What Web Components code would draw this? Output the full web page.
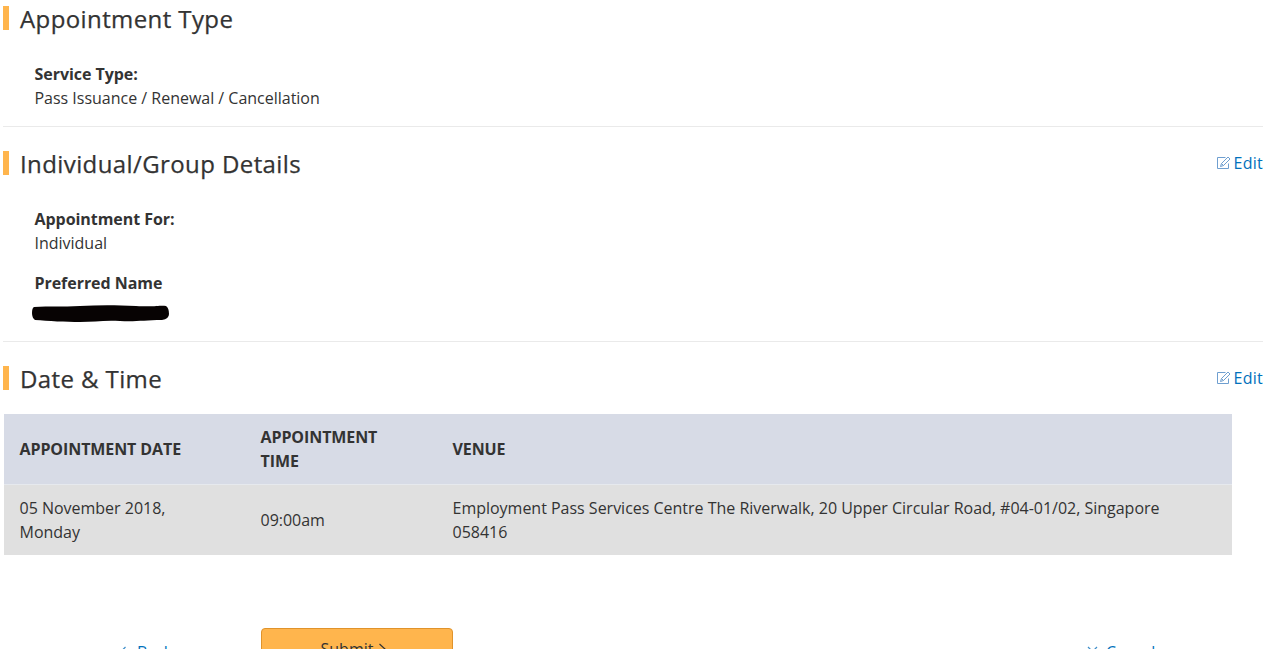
<!DOCTYPE html>
<html>
<head>
<meta charset="utf-8">
<title>Appointment review</title>
<style>
  html { overflow: hidden; }
  body {
    margin: 0;
    padding: 6px 8px 0 3px;
    font-family: "Open Sans", sans-serif;
    font-size: 16px;
    line-height: 24px;
    letter-spacing: -0.012px;
    color: #333;
    background: #fff;
  }
</style>
</head>
<body>
  <review-section heading="Appointment Type">
    <review-field label="Service Type:">Pass Issuance / Renewal / Cancellation</review-field>
  </review-section>

  <review-section heading="Individual/Group Details" editable>
    <review-field label="Appointment For:">Individual</review-field>
    <review-field label="Preferred Name"><redacted-text></redacted-text></review-field>
  </review-section>

  <review-section heading="Date &amp; Time" editable plain>
    <appointment-table></appointment-table>
  </review-section>

  <form-actions></form-actions>

<script>
const sectionTemplate = document.createElement('template');
sectionTemplate.innerHTML = `
  <style>
    :host {
      display: block;
      padding-bottom: 16px;
      margin-bottom: 24px;
      border-bottom: 1px solid #eaeaea;
    }
    :host([plain]) {
      padding-bottom: 0;
      margin-bottom: 0;
      border-bottom: 0;
    }
    .head {
      display: flex;
      align-items: center;
      justify-content: space-between;
      height: 24px;
      margin-bottom: 32px;
    }
    :host([plain]) .head {
      margin-bottom: 24px;
    }
    h2 {
      display: flex;
      margin: 0;
      border-left: 6px solid #ffb54d;
      font-size: 24px;
      line-height: 24px;
      font-weight: 400;
      letter-spacing: 0.4px;
      -webkit-text-stroke: 0.25px #333;
      color: #333;
    }
    h2 span {
      padding: 1px 0 0 11px;
      height: 23px;
    }
    a {
      display: none;
      align-items: center;
      gap: 3px;
      color: #0071bc;
      text-decoration: none;
      letter-spacing: 0.25px;
    }
    :host([editable]) a {
      display: flex;
    }
    svg {
      width: 14px;
      height: 14px;
      fill: none;
      stroke: #6f9fd0;
      stroke-width: 1;
    }
  </style>
  <div class="head">
    <h2><span></span></h2>
    <a href="#">
      <svg viewBox="0 0 14 14">
        <path d="M11.5 7.5v5h-11v-11h8"/>
        <path d="M3.5 10.5l1-3 6.5-6.5 2 2-6.5 6.5z"/>
        <path d="M4.5 7.5l2 2"/>
      </svg>
      Edit
    </a>
  </div>
  <slot></slot>
`;

class ReviewSection extends HTMLElement {
  constructor() {
    super();
    this.attachShadow({ mode: 'open' });
    this.shadowRoot.appendChild(sectionTemplate.content.cloneNode(true));
    this.shadowRoot.querySelector('h2 span').textContent = this.getAttribute('heading');
  }
}

const fieldTemplate = document.createElement('template');
fieldTemplate.innerHTML = `
  <style>
    :host {
      display: block;
      padding-left: 31.5px;
      margin-bottom: 16px;
      color: #333;
    }
    :host(:last-child) {
      margin-bottom: 0;
    }
    .label {
      font-weight: 700;
      letter-spacing: -0.05px;
    }
  </style>
  <div class="label"></div>
  <div><slot></slot></div>
`;

class ReviewField extends HTMLElement {
  constructor() {
    super();
    this.attachShadow({ mode: 'open' });
    this.shadowRoot.appendChild(fieldTemplate.content.cloneNode(true));
    this.shadowRoot.querySelector('.label').textContent = this.getAttribute('label');
  }
}

class RedactedText extends HTMLElement {
  constructor() {
    super();
    this.attachShadow({ mode: 'open' });
    this.shadowRoot.innerHTML = `
      <style>
        :host {
          display: block;
          width: 137px;
          height: 17px;
          margin: 10px 0 0 -2.5px;
          padding-bottom: 3px;
        }
        svg {
          display: block;
          width: 137px;
          height: 17px;
          fill: #070303;
          filter: blur(0.4px);
        }
      </style>
      <svg viewBox="0 0 137 17">
        <path d="M2 2 C18 1 30 2 48 1 S84 0 104 1 S128 0 134 1 Q137 3 137 9 Q137 14 130 15 C112 15 104 17 88 16 S62 17 48 17 S16 16 3 15 Q0 13 0 8 Q0 3 2 2 Z"/>
      </svg>
    `;
  }
}

const tableTemplate = document.createElement('template');
tableTemplate.innerHTML = `
  <style>
    :host {
      display: block;
      width: 1228px;
      margin-left: 1px;
    }
    .row {
      display: grid;
      grid-template-columns: 241px 192px 795px;
      align-items: center;
    }
    .row > div {
      padding: 11px 32px 11px 15.5px;
    }
    .row > div:last-child {
      padding-right: 60px;
    }
    .head {
      background: #d7dbe6;
      border-bottom: 1px solid #e6e9ee;
      font-weight: 700;
      letter-spacing: -0.09px;
      text-transform: uppercase;
    }
    .body {
      background: #e0e0e0;
    }
  </style>
  <div class="row head">
    <div>Appointment Date</div>
    <div>Appointment Time</div>
    <div>Venue</div>
  </div>
  <div class="row body">
    <div>05 November 2018, Monday</div>
    <div>09:00am</div>
    <div>Employment Pass Services Centre The Riverwalk, 20 Upper Circular Road, #04-01/02, Singapore 058416</div>
  </div>
`;

class AppointmentTable extends HTMLElement {
  constructor() {
    super();
    this.attachShadow({ mode: 'open' });
    this.shadowRoot.appendChild(tableTemplate.content.cloneNode(true));
  }
}

const actionsTemplate = document.createElement('template');
actionsTemplate.innerHTML = `
  <style>
    :host {
      display: grid;
      grid-template-columns: 258px 192px 1fr;
      margin-top: 73px;
    }
    a {
      display: flex;
      align-items: flex-start;
      height: 44px;
      color: #0071bc;
      text-decoration: none;
      padding-top: 12px;
      box-sizing: border-box;
    }
    a svg {
      width: 11px;
      height: 11px;
      margin-top: 6px;
      fill: none;
      stroke: #3f8fca;
      stroke-width: 1.2;
      flex: none;
    }
    .back {
      padding-left: 115px;
      gap: 8px;
    }
    .cancel {
      padding-left: 634px;
      gap: 8px;
    }
    button {
      display: flex;
      align-items: center;
      justify-content: center;
      gap: 5px;
      height: 44px;
      border: 1px solid #e0932b;
      border-radius: 4px;
      background: #ffb54d;
      color: #333;
      font: inherit;
      padding: 0 6px 2px 0;
    }
    button svg {
      width: 9px;
      height: 13px;
      fill: none;
      stroke: #333;
      stroke-width: 1.2;
    }
  </style>
  <a class="back" href="#">
    <svg viewBox="0 0 11 11"><path d="M7.5 1l-4.5 4.5 4.5 4.5"/></svg>Back
  </a>
  <button type="button">Submit<svg viewBox="0 0 9 13"><path d="M1.5 1l6 5.5-6 5.5"/></svg></button>
  <a class="cancel" href="#">
    <svg viewBox="0 0 11 11"><path d="M1 1l9 9M10 1l-9 9"/></svg>Cancel
  </a>
`;

class FormActions extends HTMLElement {
  constructor() {
    super();
    this.attachShadow({ mode: 'open' });
    this.shadowRoot.appendChild(actionsTemplate.content.cloneNode(true));
  }
}

window.customElements.define('review-section', ReviewSection);
window.customElements.define('review-field', ReviewField);
window.customElements.define('redacted-text', RedactedText);
window.customElements.define('appointment-table', AppointmentTable);
window.customElements.define('form-actions', FormActions);
</script>
</body>
</html>
